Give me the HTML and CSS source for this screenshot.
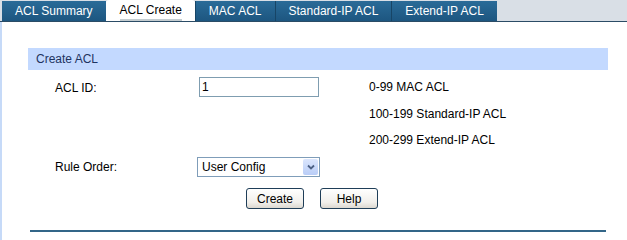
FILE: index.html
```html
<!DOCTYPE html>
<html lang="en">
<head>
    <meta charset="UTF-8">
    <title>ACL Create</title>
    <link rel="stylesheet" href="styles.css">
</head>
<body>
    <div class="tabs">
        <div class="tab tab-first">ACL Summary</div>
        <div class="tab active"><span>ACL Create</span></div>
        <div class="tab">MAC ACL</div>
        <div class="tab">Standard-IP ACL</div>
        <div class="tab">Extend-IP ACL</div>
    </div>

    <div class="content">
        <div class="panel">
            <div class="panel-title">Create ACL</div>
            <div class="form">
                <div class="label">ACL ID:</div>
                <div class="field"><input type="text" class="text-input" value="1"></div>
                <div class="note">0-99 MAC ACL</div>

                <div class="label"></div>
                <div class="field"></div>
                <div class="note">100-199 Standard-IP ACL</div>

                <div class="label"></div>
                <div class="field"></div>
                <div class="note">200-299 Extend-IP ACL</div>

                <div class="label">Rule Order:</div>
                <div class="field">
                    <div class="select">
                        <span>User Config</span>
                        <span class="select-arrow">
                            <svg width="8" height="6" viewBox="0 0 8 6"><path d="M1 1.5 L4 4.5 L7 1.5" fill="none" stroke="#4d6185" stroke-width="1.8"/></svg>
                        </span>
                    </div>
                </div>
                <div class="note"></div>
            </div>
            <div class="buttons">
                <button type="button">Create</button>
                <button type="button">Help</button>
            </div>
            <div class="rule"></div>
        </div>
    </div>
</body>
</html>
```

FILE: styles.css
```css
body {
    margin: 0;
    padding: 0;
    font-family: 'Liberation Sans', Arial, sans-serif;
    font-size: 12px;
    color: #000;
    background-color: #fff;
}

.tabs {
    display: flex;
    height: 21px;
    padding-left: 2px;
    background-color: #d9dfe6;
    border-bottom: 1px solid #2b4c66;
}

.tab {
    height: 20px;
    margin-top: 1px;
    line-height: 20px;
    padding: 0 13px;
    color: #fff;
    background: linear-gradient(#2a6b98, #1d5680);
    border-left: 1px solid #174566;
    white-space: nowrap;
}

.tab-first {
    border-left: none;
    padding: 0 13px;
}

.tab.active {
    background: #fff;
    color: #000;
    border-left: 1px solid #fff;
    border-radius: 3px 3px 0 0;
    height: 21px;
    margin-top: 0;
    margin-bottom: -1px;
    line-height: 20px;
}

.tab.active span {
    display: inline-block;
    line-height: 18px;
    border-bottom: 2px solid #c3ccd0;
}

.content {
    border-left: 2px solid #c6daf8;
    min-height: 192px;
    padding: 26px 0 0 26px;
}

.panel {
    width: 580px;
}

.panel-title {
    height: 22px;
    line-height: 22px;
    padding-left: 8px;
    background-color: #c3d9ff;
    color: #1e3461;
}

.form {
    display: grid;
    grid-template-columns: 144px 170px 1fr;
    grid-auto-rows: 26.5px;
    align-items: center;
    margin-top: 4px;
    padding-left: 27px;
}

.label {
    padding-top: 1px;
}

.text-input {
    box-sizing: border-box;
    width: 120px;
    height: 20px;
    padding: 0 2px;
    border: 1px solid #7f9db0;
    font-family: inherit;
    font-size: 12px;
    outline: none;
}

.select {
    box-sizing: border-box;
    display: flex;
    align-items: center;
    justify-content: space-between;
    width: 123px;
    height: 20px;
    margin-left: -2px;
    padding: 1px 1px 1px 4px;
    border: 1px solid #7f9db9;
}

.select-arrow {
    display: flex;
    align-items: center;
    justify-content: center;
    width: 15px;
    height: 16px;
    border-radius: 2px;
    background: linear-gradient(#dbe6fd, #b9cdf7);
}

.buttons {
    display: flex;
    gap: 16px;
    margin-top: 8px;
    padding-left: 218px;
}

button {
    box-sizing: border-box;
    width: 58px;
    height: 21px;
    padding: 0;
    border: 1px solid #1f3e58;
    border-radius: 3px;
    background: linear-gradient(#ffffff, #f1efeb 70%, #dcd8d0);
    font-family: inherit;
    font-size: 12px;
    color: #000;
    cursor: pointer;
}

.rule {
    height: 2px;
    margin: 21px 2px 0 2px;
    background-color: #336688;
}
```
